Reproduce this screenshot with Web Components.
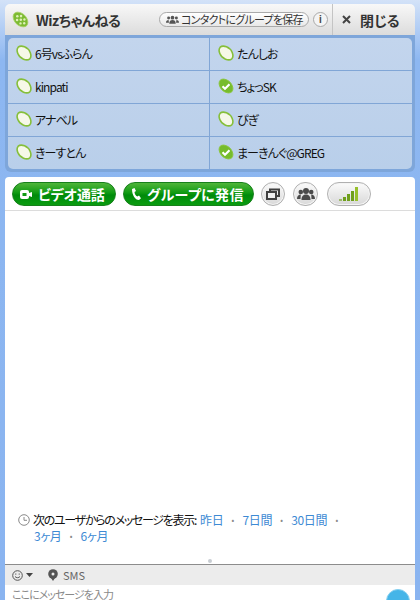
<!DOCTYPE html>
<html lang="ja">
<head>
<meta charset="utf-8">
<title>Wizちゃんねる</title>
<style>
  html, body { margin: 0; height: 600px; overflow: hidden; }
  body {
    background: linear-gradient(#d3e2f8 0, #8db7f1 60px, #8ab4f0 100%);
    font: 12px "Noto Sans CJK JP", "Liberation Sans", sans-serif;
    font-feature-settings: "palt";
    color: #111;
  }
</style>
</head>
<body>
<chat-window>
  <chat-header slot="header" title-text="Wizちゃんねる"></chat-header>
  <contact-list slot="contacts">
    <contact-row>6号vsふらん</contact-row>
    <contact-row>たんしお</contact-row>
    <contact-row>kinpati</contact-row>
    <contact-row online>ちょっSK</contact-row>
    <contact-row>アナベル</contact-row>
    <contact-row>ぴぎ</contact-row>
    <contact-row>きーすとん</contact-row>
    <contact-row online>まーきんぐ@GREG</contact-row>
  </contact-list>
  <chat-toolbar slot="toolbar"></chat-toolbar>
  <chat-history slot="history"></chat-history>
  <chat-composer slot="composer"></chat-composer>
</chat-window>

<script>
// shared icon: the lime blob, white when offline, green with a tick when online
const blobPath = 'M2.2 2.2C4 .6 6.500 1 8.500 1.800c2.500 1 4.700 3.200 5.700 5.700.8 2 1.200 4.500-.4 6.300-1.800 1.600-4.300 1.200-6.300.4-2.500-1-4.700-3.200-5.700-5.700C1 6.500 .6 4 2.200 2.200z';

class ChatWindow extends HTMLElement {
  constructor() {
    super();
    this.attachShadow({ mode: 'open' });
    this.shadowRoot.innerHTML = `
      <style>
        :host { display: flex; flex-direction: column; height: 600px; padding: 4px 5px 0; box-sizing: border-box; }
        .contacts {
          background: #7ea6da;
          padding: 3px;
          border-radius: 0 0 6px 6px;
          margin-bottom: 5px;
        }
        .main {
          flex: 1;
          display: flex;
          flex-direction: column;
          background: #fff;
          border-radius: 4px 4px 0 0;
          min-height: 0;
        }
      </style>
      <slot name="header"></slot>
      <div class="contacts"><slot name="contacts"></slot></div>
      <div class="main">
        <slot name="toolbar"></slot>
        <slot name="history"></slot>
        <slot name="composer"></slot>
      </div>
    `;
  }
}

class ChatHeader extends HTMLElement {
  constructor() {
    super();
    this.attachShadow({ mode: 'open' });
    this.shadowRoot.innerHTML = `
      <style>
        :host {
          display: flex; align-items: center; height: 31px;
          background: linear-gradient(#f8f8f8, #dcdcdc);
          border-radius: 5px 5px 0 0;
          color: #333;
        }
        .logo { margin-left: 7px; width: 17px; height: 17px; flex: none; }
        .title { margin-left: 7px; font-size: 14px; font-weight: 700; flex: 1; white-space: nowrap; letter-spacing: -.5px; }
        .save {
          display: flex; align-items: center; gap: 2px; height: 15px; width: 150px; box-sizing: border-box;
          padding-left: 6px; border: 1px solid #a9a9a9; border-radius: 8px;
          background: linear-gradient(#fff, #e8e8e8);
          font-size: 11px; line-height: 13px; white-space: nowrap; color: #333;
        }
        .save svg { flex: none; }
        .save span { letter-spacing: -.75px; }
        .info {
          width: 15px; height: 15px; box-sizing: border-box; margin-left: 4px; border: 1px solid #a9a9a9; border-radius: 50%;
          background: #f4f4f4; font: 700 10px/13px "Liberation Sans", sans-serif; text-align: center; color: #444;
        }
        .close {
          display: flex; align-items: center; height: 100%; width: 83px; margin-left: 4px; box-sizing: border-box;
          border-left: 1px solid #c4c4c4; padding-left: 9px; font-size: 14px; font-weight: 700; white-space: nowrap; color: #333;
        }
        .close span { margin-left: 9px; }
      </style>
      <svg class="logo" viewBox="0 0 16 16">
        <path d="${blobPath}" fill="#7dbb32" stroke="#a6d060" stroke-width=".8"/>
        <g fill="#dff0b8"><circle cx="5" cy="5" r="1.200"/><circle cx="8.500" cy="4.800" r="1.200"/><circle cx="4.800" cy="8.500" r="1.200"/><circle cx="8.300" cy="8.300" r="1.200"/><circle cx="11.700" cy="8" r="1.100"/><circle cx="8" cy="11.700" r="1.100"/><circle cx="11.500" cy="11.500" r="1.100"/></g>
      </svg>
      <span class="title">${this.getAttribute('title-text')}</span>
      <span class="save">
        <svg width="13" height="9" viewBox="0 0 14 9" fill="#555"><circle cx="7" cy="2.500" r="2"/><circle cx="2.800" cy="3" r="1.600"/><circle cx="11.200" cy="3" r="1.600"/><path d="M3.500 9c0-3 1.500-4 3.500-4s3.500 1 3.500 4zM0 8c0-2 1-3 2.800-3l.4 3zM14 8c0-2-1-3-2.800-3l-.4 3z"/></svg>
        <span>コンタクトにグループを保存</span>
      </span>
      <span class="info">i</span>
      <span class="close">
        <svg width="9" height="9" viewBox="0 0 9 9" stroke="#444" stroke-width="2"><path d="M1 1l7 7M8 1l-7 7"/></svg>
        <span>閉じる</span>
      </span>
    `;
  }
}

class ContactList extends HTMLElement {
  constructor() {
    super();
    this.attachShadow({ mode: 'open' });
    this.shadowRoot.innerHTML = `
      <style>
        :host {
          display: grid; grid-template-columns: 201px 203px; grid-template-rows: 33px 33px 33px 32px;
          background: linear-gradient(#c3d5ed, #b9cfea); border-radius: 5px;
          overflow: hidden;
        }
        ::slotted(contact-row:nth-child(even)) { border-left: 1px solid #81a6d6; }
        ::slotted(contact-row:nth-last-child(-n+2)) { border-bottom: 0; }
      </style>
      <slot></slot>
    `;
  }
}

class ContactRow extends HTMLElement {
  constructor() {
    super();
    const online = this.hasAttribute('online');
    this.attachShadow({ mode: 'open' });
    this.shadowRoot.innerHTML = `
      <style>
        :host {
          display: flex; align-items: center; gap: 3px; box-sizing: border-box;
          padding: 0 0 2px 8px; border-bottom: 1px solid #81a6d6;
          font-size: 12px; letter-spacing: -.9px; color: #111; white-space: nowrap;
        }
        svg { width: 16px; height: 16px; flex: none; }
      </style>
      <svg viewBox="0 0 16 16">
        <path d="${blobPath}" fill="${online ? '#76bc2c' : '#f6f8e8'}" stroke="${online ? '#8cc63f' : '#86bf3a'}" stroke-width="${online ? 1 : 1.600}"/>
        ${online ? '<path d="M4.500 8.300l2.500 2.500 4.500-4.500" fill="none" stroke="#fff" stroke-width="2.200"/>' : ''}
      </svg>
      <slot></slot>
    `;
  }
}

class PillButton extends HTMLElement {
  constructor() {
    super();
    this.attachShadow({ mode: 'open' });
    this.shadowRoot.innerHTML = `
      <style>
        :host {
          display: inline-flex; align-items: center; height: 24px; box-sizing: border-box;
          border-radius: 12px; padding-left: 7px; gap: 6px;
          background: linear-gradient(#4fb53a 0, #0f9a12 45%, #008a0a 55%, #0a9c10 100%);
          border: 1px solid #17801b;
          color: #fff; font-size: 14px; font-weight: 700; white-space: nowrap;
        }
      </style>
      <slot name="icon"></slot><slot></slot>
    `;
  }
}

class RoundButton extends HTMLElement {
  constructor() {
    super();
    this.attachShadow({ mode: 'open' });
    this.shadowRoot.innerHTML = `
      <style>
        :host {
          display: inline-flex; align-items: center; justify-content: center; box-sizing: border-box;
          height: 24px; min-width: 24px; border-radius: 12px;
          border: 1px solid #b0b0b0;
          background: linear-gradient(#fbfbfb, #d8d8d8);
          box-shadow: inset 0 0 0 1px #f4f4f4;
        }
      </style>
      <slot></slot>
    `;
  }
}

class ChatToolbar extends HTMLElement {
  constructor() {
    super();
    this.attachShadow({ mode: 'open' });
    this.shadowRoot.innerHTML = `
      <style>
        :host {
          display: flex; align-items: center; height: 34px; box-sizing: border-box;
          padding: 1px 0 0 7px; border-bottom: 1px solid #dcdcdc; flex: none;
        }
        pill-button:nth-of-type(1) { width: 104px; margin-right: 7px; letter-spacing: -.1px; }
        pill-button:nth-of-type(2) { width: 131px; margin-right: 7px; letter-spacing: .4px; }
        .windows { margin-right: 8px; }
        .people { width: 25px; margin-right: 9px; }
        .signal { width: 44px; }
      </style>
      <pill-button>
        <svg slot="icon" width="12" height="9" viewBox="0 0 12 9"><rect width="9" height="9" rx="2" fill="#fff"/><rect x="2.500" y="3" width="4" height="3" fill="#0f9a12"/><path d="M9 3l3-1v5l-3-1z" fill="#fff"/></svg>
        ビデオ通話
      </pill-button>
      <pill-button>
        <svg slot="icon" width="10" height="13" viewBox="0 0 10 13"><path d="M1 1l2.500-1 1.500 3-1.500 1c.2 2 1.200 3.500 2.800 4.600L8 7.500l2 2.800-2 1.700C4 12 1 7 1 1z" fill="#fff"/></svg>
        グループに発信
      </pill-button>
      <round-button class="windows">
        <svg width="14" height="12" viewBox="0 0 14 12" fill="none" stroke="#3f3f3f" stroke-width="2"><path d="M4 3V1.500h9V8h-2.500"/><rect x="1" y="4" width="9" height="7" fill="#eee"/></svg>
      </round-button>
      <round-button class="people">
        <svg width="18" height="12" viewBox="0 0 18 12" fill="#4a4a4a"><circle cx="9" cy="3" r="3"/><circle cx="3.800" cy="4" r="2.300"/><circle cx="14.200" cy="4" r="2.300"/><path d="M4.500 12c0-4 2-5.500 4.500-5.500S13.500 8 13.500 12zM0 11c0-3 1.500-4.500 3.800-4.500L3.500 11zM18 11c0-3-1.500-4.500-3.800-4.500l.3 4.500z"/></svg>
      </round-button>
      <round-button class="signal">
        <svg width="20" height="14" viewBox="0 0 20 14" fill="#6f9f1c"><rect x="0" y="12" width="3" height="2" opacity=".6"/><rect x="4" y="10" width="3" height="4"/><rect x="8" y="7" width="3" height="7"/><rect x="12" y="4" width="3" height="10"/><rect x="16" y="0" width="3" height="14" fill="#97c02c"/></svg>
      </round-button>
    `;
  }
}

class ChatHistory extends HTMLElement {
  constructor() {
    super();
    this.attachShadow({ mode: 'open' });
    this.shadowRoot.innerHTML = `
      <style>
        :host {
          display: flex; flex-direction: column; justify-content: flex-end; flex: 1; min-height: 0;
          position: relative; box-sizing: border-box; padding: 0 0 20px 13px;
          font-size: 12px; line-height: 16px; color: #111;
        }
        .line { display: flex; align-items: center; white-space: nowrap; height: 16px; }
        .second { padding-left: 16px; }
        svg { margin-right: 3px; flex: none; }
        a { color: #3d8ad4; text-decoration: none; letter-spacing: -.3px; }
        i { color: #8a8a8a; font-style: normal; font-size: 8px; width: 19px; text-align: center; }
        .intro { margin-right: 4px; letter-spacing: -1.3px; }
        .grip {
          position: absolute; left: 203px; bottom: 1px; width: 4px; height: 4px;
          border-radius: 50%; background: #c8cdd2;
        }
      </style>
      <div class="line">
        <svg width="12" height="12" viewBox="0 0 12 12" fill="none" stroke="#8a8a8a"><circle cx="6" cy="6" r="5.300"/><path d="M6 3v3.300H9"/></svg>
        <span class="intro">次のユーザからのメッセージを表示:</span>
        <a>昨日</a><i>•</i><a>7日間</a><i>•</i><a>30日間</a><i>•</i>
      </div>
      <div class="line second"><a>3ヶ月</a><i>•</i><a>6ヶ月</a></div>
      <span class="grip"></span>
    `;
  }
}

class ChatComposer extends HTMLElement {
  constructor() {
    super();
    this.attachShadow({ mode: 'open' });
    this.shadowRoot.innerHTML = `
      <style>
        :host { display: block; flex: none; height: 36px; position: relative; overflow: hidden; font-size: 11px; }
        .bar {
          display: flex; align-items: center; height: 21px; box-sizing: border-box;
          border-top: 1px solid #8c8c8c; background: #ececec; padding-left: 7px; color: #666;
        }
        .arrow { margin: 0 15px 0 3px; }
        .sms { margin-left: 5px; font-size: 11px; }
        .input { padding: 4px 0 0 7px; color: #8a8a8a; line-height: 11px; letter-spacing: -1px; white-space: nowrap; }
        .send {
          position: absolute; right: 5px; top: 25px; width: 24px; height: 24px; border-radius: 50%;
          background: #45b5e8; border: 1px solid #86d0f0; box-sizing: border-box;
        }
      </style>
      <div class="bar">
        <svg width="11" height="11" viewBox="0 0 11 11" fill="none" stroke="#555"><circle cx="5.500" cy="5.500" r="4.800"/><path d="M3 6.500c1.200 1.600 3.800 1.600 5 0"/><path d="M3.800 3.500v1.200M7.200 3.500v1.200"/></svg>
        <svg class="arrow" width="7" height="4" viewBox="0 0 7 4" fill="#444"><path d="M0 0h7L3.500 4z"/></svg>
        <svg width="10" height="12" viewBox="0 0 10 12" fill="#555"><circle cx="5" cy="5" r="4.800"/><path d="M3 9h4l-2 3z"/><circle cx="5" cy="5" r="1.500" fill="#eee"/></svg>
        <span class="sms">SMS</span>
      </div>
      <div class="input">ここにメッセージを入力</div>
      <span class="send"></span>
    `;
  }
}

customElements.define('chat-window', ChatWindow);
customElements.define('chat-header', ChatHeader);
customElements.define('contact-list', ContactList);
customElements.define('contact-row', ContactRow);
customElements.define('pill-button', PillButton);
customElements.define('round-button', RoundButton);
customElements.define('chat-toolbar', ChatToolbar);
customElements.define('chat-history', ChatHistory);
customElements.define('chat-composer', ChatComposer);
</script>
</body>
</html>
